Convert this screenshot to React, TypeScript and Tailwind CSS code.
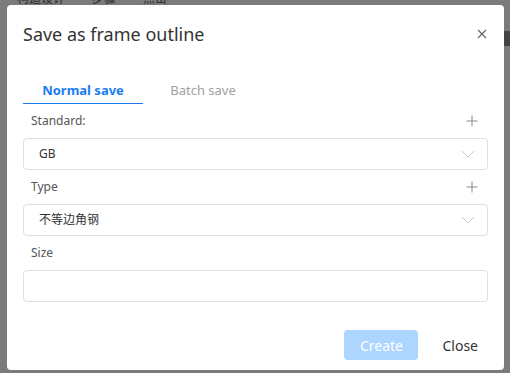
import React from "react";

const font = { fontFamily: '"Noto Sans", "Noto Sans CJK SC", sans-serif' };

function Chevron() {
  return (
    <svg width="14" height="8" viewBox="0 0 14 8" fill="none">
      <path d="M1 1l6 6 6-6" stroke="#c8c8c8" strokeWidth="1" />
    </svg>
  );
}

function Plus() {
  return (
    <svg width="12" height="12" viewBox="0 0 12 12" fill="none">
      <path d="M6 0.5v11M0.5 6h11" stroke="#888" strokeWidth="1" />
    </svg>
  );
}

export default function App() {
  return (
    <div
      className="relative w-[510px] h-[373px] overflow-hidden bg-[#7b7b7b]"
      style={font}
    >
      <div className="flex gap-[27px] pl-[17px] -mt-[10px] text-[12px] leading-[18px] text-[#2a2a2a]">
        <span>构造设计</span>
        <span>步骤</span>
        <span>点击</span>
      </div>
      <div className="absolute right-0 top-[31px] w-[6px] h-[15px] bg-[#444]" />
      <div className="absolute left-[7px] top-[5px] w-[497px] h-[365px] bg-white rounded-[4px] flex flex-col">
        <div className="flex items-center justify-between pl-[16px] pr-[17px] h-[58px]">
          <span className="text-[18px] text-[#333] leading-none">Save as frame outline</span>
          <svg width="10" height="10" viewBox="0 0 10 10">
            <path d="M1 1l8 8M9 1l-8 8" stroke="#666" strokeWidth="1.2" />
          </svg>
        </div>
        <div className="flex mt-[16px] pl-[16px] h-[25px]">
          <div className="w-[120px] h-full flex items-start justify-center pt-[3px] border-b border-[#1a7cf0] text-[13px] leading-[17px] font-bold text-[#1a7cf0]">
            Normal save
          </div>
          <div className="w-[120px] h-full flex items-start justify-center pt-[3px] text-[13px] leading-[17px] text-[#a0a0a0]">
            Batch save
          </div>
        </div>
        <div className="flex flex-col px-[16px]">
          <div className="flex items-center justify-between h-[34px] pl-[8px] pr-[10px] text-[12px] text-[#555]">
            <span>Standard:</span>
            <Plus />
          </div>
          <div className="flex items-center justify-between h-[32px] border border-[#dcdfe6] rounded-[4px] pl-[15px] pr-[12px] text-[12px] text-[#333]">
            <span>GB</span>
            <Chevron />
          </div>
          <div className="flex items-center justify-between h-[34px] pl-[8px] pr-[10px] text-[12px] text-[#555]">
            <span>Type</span>
            <Plus />
          </div>
          <div className="flex items-center justify-between h-[32px] border border-[#dcdfe6] rounded-[4px] pl-[15px] pr-[12px] text-[12px] text-[#333]">
            <span>不等边角钢</span>
            <Chevron />
          </div>
          <div className="flex items-center h-[34px] pl-[8px] text-[12px] text-[#555]">
            <span>Size</span>
          </div>
          <div className="h-[32px] border border-[#dcdfe6] rounded-[4px]" />
        </div>
        <div className="flex items-center justify-end gap-[24px] mt-[28px] pr-[26px]">
          <div className="w-[74px] h-[30px] rounded-[4px] bg-[#acd5ff] text-white text-[14px] flex items-center justify-center">
            Create
          </div>
          <span className="text-[14px] text-[#333]">Close</span>
        </div>
      </div>
    </div>
  );
}
